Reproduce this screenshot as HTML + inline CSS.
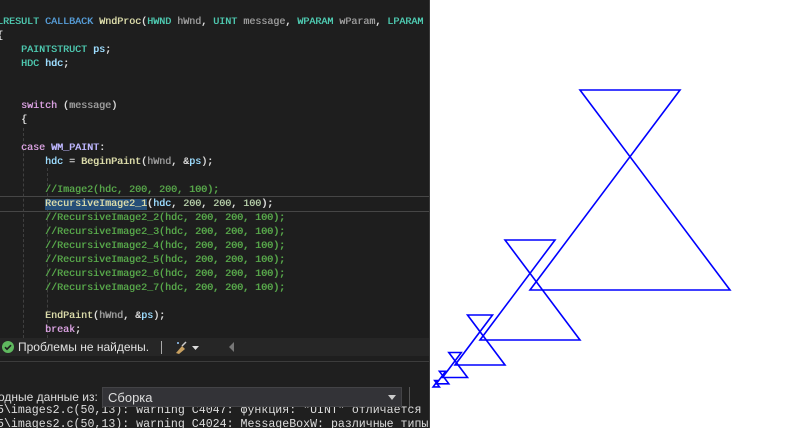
<!DOCTYPE html><html><head><meta charset="utf-8"><style>
body{margin:0;width:812px;height:428px;background:#fff;position:relative;overflow:hidden}
#ed{position:absolute;left:0;top:0;width:429px;height:428px;background:#1e1e1e;overflow:hidden;border-right:1px solid #3a3a3a}
.code{position:absolute;left:-3px;top:16px;font:10px/14px "Liberation Mono",monospace;color:#dcdcdc;white-space:pre;text-shadow:0.4px 0 0 currentColor}
.k{color:#569cd6}.t{color:#4ec9b0}.f{color:#dcdcaa}.p{color:#9a9a9a}.v{color:#9cdcfe}.c{color:#57a64a}.n{color:#b5cea8}.m{color:#d8a0df}.mac{color:#beb7ff}
.sel{background:#264f78}
.cur{position:absolute;left:0;top:196px;width:429px;height:14px;border-top:1px solid #464646;border-bottom:1px solid #464646}
.guide{position:absolute;left:23px;border-left:1px dashed #404040;width:0}
#st{position:absolute;left:0;top:338px;width:429px;height:18px;background:#262626;font:12px "Liberation Sans",sans-serif;color:#e0e0e0}
#sep{position:absolute;left:0;top:361px;width:429px;height:1px;background:#3c3c3c}
#out{position:absolute;left:0;top:363px;width:429px;height:65px;background:#1f1f1f;font:12px "Liberation Sans",sans-serif;color:#ddd;overflow:hidden}
.cb{position:absolute;left:102px;top:24px;width:300px;height:20px;background:#333337;border:1px solid #434346;box-sizing:border-box;z-index:2}
.ol{position:absolute;left:-3px;font:11.6px "Liberation Mono",monospace;color:#ddd;white-space:pre}
</style></head><body>
<div id="ed">
<div class="cur"></div>
<div class="guide" style="top:128px;height:210px"></div>
<div class="guide" style="left:47px;top:168px;height:170px"></div>
<div class="code"><span class="t">LRESULT</span> <span class="k">CALLBACK</span> <span class="f">WndProc</span>(<span class="t">HWND</span> <span class="p">hWnd</span>, <span class="t">UINT</span> <span class="p">message</span>, <span class="t">WPARAM</span> <span class="p">wParam</span>, <span class="t">LPARAM</span>
{
    <span class="t">PAINTSTRUCT</span> <span class="v">ps</span>;
    <span class="t">HDC</span> <span class="v">hdc</span>;


    <span class="m">switch</span> (<span class="p">message</span>)
    {

    <span class="m">case</span> <span class="mac">WM_PAINT</span>:
        <span class="v">hdc</span> = <span class="f">BeginPaint</span>(<span class="p">hWnd</span>, &amp;<span class="v">ps</span>);

        <span class="c">//Image2(hdc, 200, 200, 100);</span>
        <span class="f sel">RecursiveImage2_1</span>(<span class="v">hdc</span>, <span class="n">200</span>, <span class="n">200</span>, <span class="n">100</span>);
        <span class="c">//RecursiveImage2_2(hdc, 200, 200, 100);</span>
        <span class="c">//RecursiveImage2_3(hdc, 200, 200, 100);</span>
        <span class="c">//RecursiveImage2_4(hdc, 200, 200, 100);</span>
        <span class="c">//RecursiveImage2_5(hdc, 200, 200, 100);</span>
        <span class="c">//RecursiveImage2_6(hdc, 200, 200, 100);</span>
        <span class="c">//RecursiveImage2_7(hdc, 200, 200, 100);</span>

        <span class="f">EndPaint</span>(<span class="p">hWnd</span>, &amp;<span class="v">ps</span>);
        <span class="m">break</span>;</div>
<div id="st">
<svg style="position:absolute;left:2px;top:3px" width="12" height="12"><circle cx="6" cy="6" r="6" fill="#5fb95f"/><path d="M3 6.2l2 2 4-4" stroke="#1e1e1e" stroke-width="1.6" fill="none"/></svg>
<span style="position:absolute;left:18px;top:2px">Проблемы не найдены.</span>
<div style="position:absolute;left:161px;top:3px;width:1px;height:13px;background:#aaa"></div>
<svg style="position:absolute;left:174px;top:2px" width="28" height="14"><path d="M2 13l6-7 3 3-6 5z" fill="#c8a060"/><path d="M8 6l4-4" stroke="#ccc" stroke-width="1.5"/><circle cx="4" cy="3" r="1" fill="#9cf"/><path d="M18 6h7l-3.5 4z" fill="#ddd"/></svg>
<svg style="position:absolute;left:228px;top:4px" width="8" height="10"><path d="M6 0v10L1 5z" fill="#777"/></svg>
</div>
<div id="sep"></div>
<div id="out">
<span style="position:absolute;left:-2px;top:27px">одные данные из:</span>
<div class="cb"><span style="position:absolute;left:5px;top:2px;font-size:13px">Сборка</span><svg style="position:absolute;right:5px;top:7px" width="8" height="5"><path d="M0 0h8L4 5z" fill="#ccc"/></svg></div>
<div style="position:absolute;left:409px;top:24px;width:1px;height:20px;background:#555"></div>
<div class="ol" style="top:41px">5\images2.c(50,13): warning C4047: функция: "UINT" отличается</div>
<div class="ol" style="top:55px">5\images2.c(50,13): warning C4024: MessageBoxW: различные типы</div>
</div>
</div>
<svg style="position:absolute;left:0;top:0" width="812" height="428"><g fill="none" stroke="#0000ff" stroke-width="1.6">
<path d="M580 90H680L530 290H730Z"/>
<path d="M505 240H555L480 340H580Z"/>
<path d="M467.5 315H492.5L455 365H505Z"/>
<path d="M448.8 352.5H461.3L442.5 377.5H467.5Z"/>
<path d="M439.4 371.3H445.6L436.3 383.8H448.8Z"/>
<path d="M434.7 380.6H437.8L433.1 386.9H439.4Z"/>
</g></svg>
</body></html>
